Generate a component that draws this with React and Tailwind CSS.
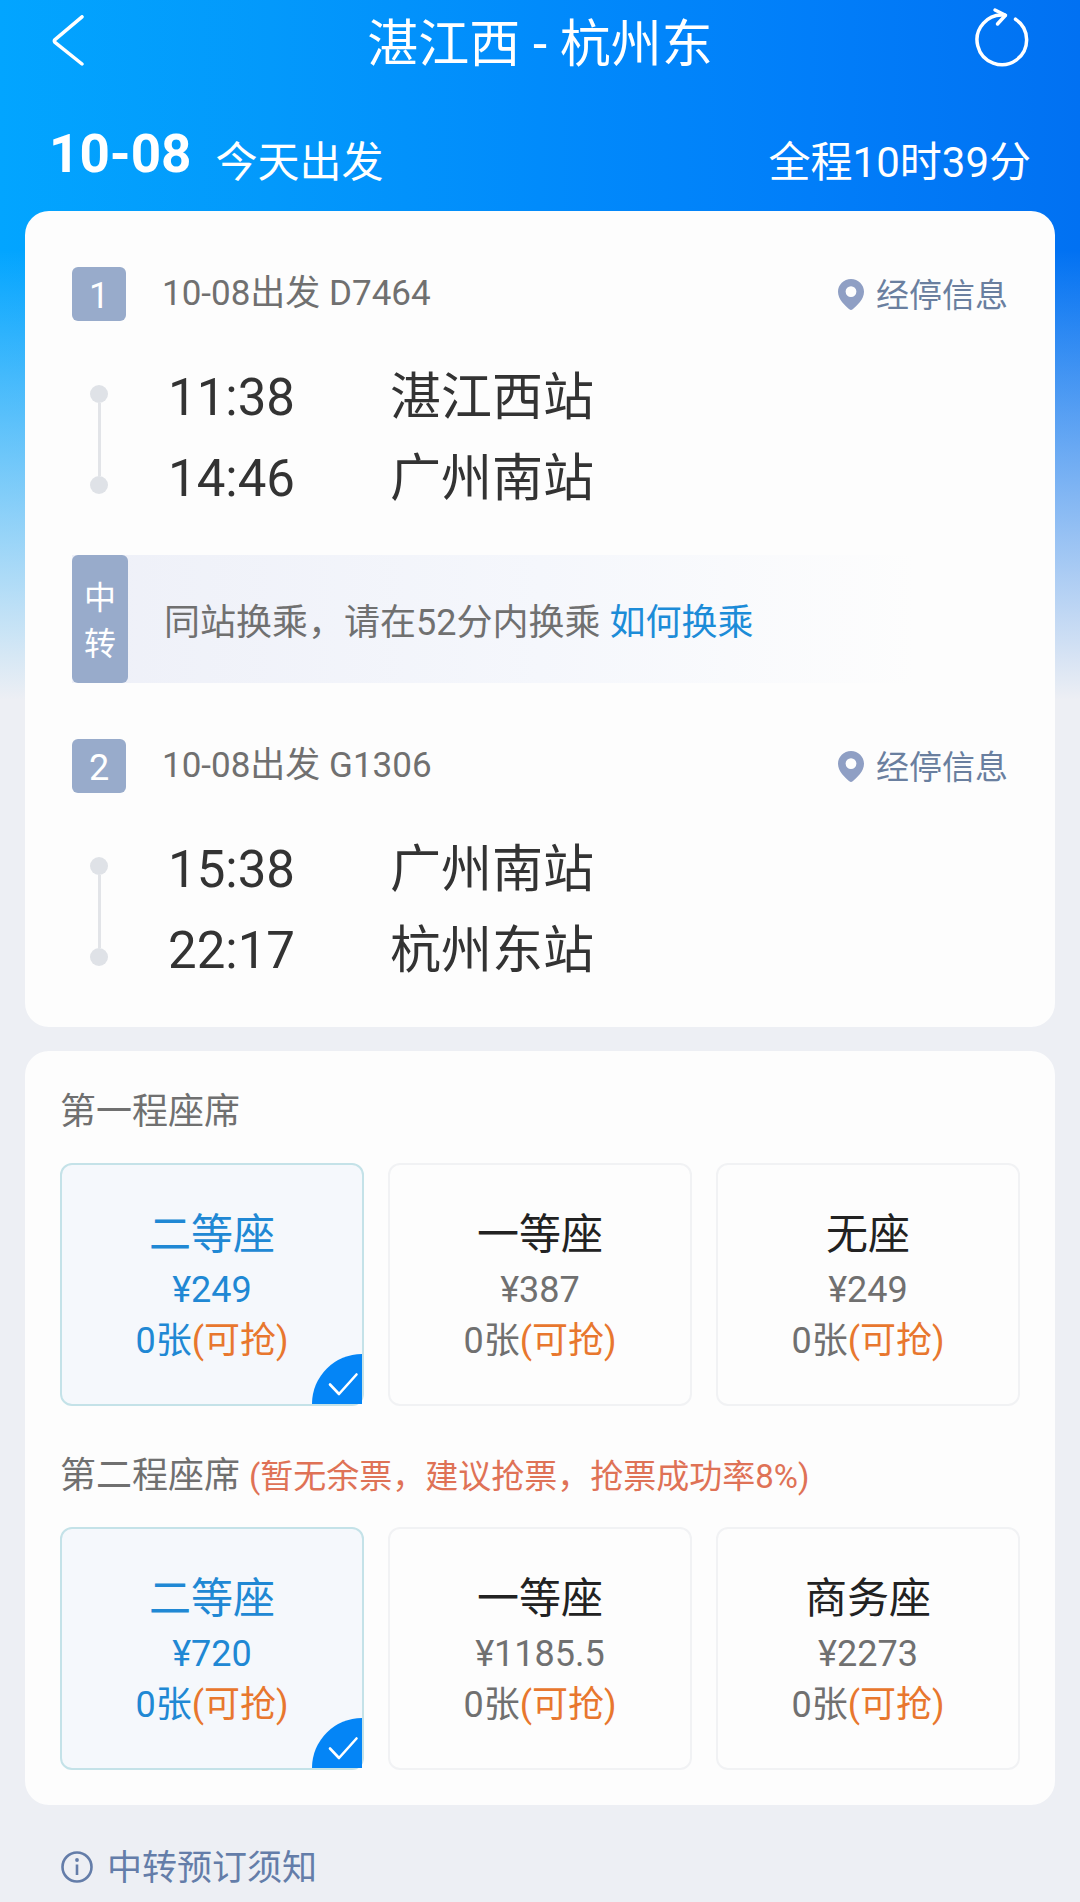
import { useState } from "react"

const legs = [
  {
    no: 1,
    label: "10-08出发 D7464",
    stops: [
      { time: "11:38", station: "湛江西站" },
      { time: "14:46", station: "广州南站" },
    ],
  },
  {
    no: 2,
    label: "10-08出发 G1306",
    stops: [
      { time: "15:38", station: "广州南站" },
      { time: "22:17", station: "杭州东站" },
    ],
  },
]

const firstSeats = [
  { name: "二等座", price: "¥249" },
  { name: "一等座", price: "¥387" },
  { name: "无座", price: "¥249" },
]

const secondSeats = [
  { name: "二等座", price: "¥720" },
  { name: "一等座", price: "¥1185.5" },
  { name: "商务座", price: "¥2273" },
]

function BackIcon() {
  return (
    <svg className="h-[54px] w-[54px]" viewBox="0 0 54 54" fill="none" stroke="currentColor" strokeWidth="3.5" strokeLinecap="round" strokeLinejoin="round">
      <path d="M33 1.8L6 24.6Q4.600 26 6 27.400L33 49" />
    </svg>
  )
}

function RefreshIcon() {
  return (
    <svg className="h-[54px] w-[54px] overflow-visible" viewBox="0 0 54 54" fill="none" stroke="currentColor" strokeWidth="3.5" strokeLinecap="round" strokeLinejoin="round">
      <path d="M38.5 4.2A24.8 24.8 0 1 1 28 .3" />
      <path d="M18 -5L28.500 .3L20.500 9" />
    </svg>
  )
}

function PinIcon() {
  return (
    <svg className="h-[31px] w-[26px]" viewBox="0 0 26 31" fill="#8f9fc4">
      <path fillRule="evenodd" d="M13 0C5.800 0 0 5.700 0 12.800C0 20.500 7 26.500 11.300 30.300C12.300 31.200 13.700 31.200 14.700 30.300C19 26.500 26 20.500 26 12.800C26 5.700 20.200 0 13 0ZM13 7.200A5.400 5.400 0 1 1 13 18A5.400 5.400 0 1 1 13 7.200Z" />
    </svg>
  )
}

function InfoIcon() {
  return (
    <svg className="h-8 w-8" viewBox="0 0 32 32" fill="none" stroke="currentColor" strokeWidth="2.600">
      <circle cx="16" cy="16" r="14.500" />
      <path d="M16 13.500V24" />
      <circle cx="16" cy="9" r="1.900" fill="currentColor" stroke="none" />
    </svg>
  )
}

function Leg({ leg }) {
  return (
    <section>
      <div className="flex items-center justify-between">
        <div className="flex items-center gap-9">
          <span className="h-[54px] w-[54px] rounded-md bg-[#98abcb] text-center text-[36px] leading-[58px] text-white">
            {leg.no}
          </span>
          <h2 className="text-[35px] leading-[54px] text-[#707070]">{leg.label}</h2>
        </div>
        <a href="#stops" className="flex items-center gap-3 text-[33px] leading-[50px] text-[#6a7f9f]">
          <PinIcon />
          <span className="pt-1">经停信息</span>
        </a>
      </div>

      <div className="mt-9 flex items-center gap-[42px]">
        {/* Route line */}
        <div className="flex w-[54px] flex-col items-center pt-0.5">
          <span className="h-[18px] w-[18px] rounded-full bg-[#dfe2e7]"></span>
          <span className="h-[73px] w-[3px] bg-[#e2e4e8]"></span>
          <span className="h-[18px] w-[18px] rounded-full bg-[#dfe2e7]"></span>
        </div>

        <ul>
          {leg.stops.map((stop) => (
            <li key={stop.time} className="flex text-[51px] leading-[81px] text-[#333333]">
              <span className="w-[222px]">{stop.time}</span>
              <span>{stop.station}</span>
            </li>
          ))}
        </ul>
      </div>
    </section>
  )
}

function SeatCard({ group, seat, checked, onChange }) {
  return (
    <label
      className={
        checked
          ? "relative flex cursor-pointer flex-col items-center rounded-xl border-2 border-[#c4e2e8] bg-[#f5f8fc] pt-10 pb-[37px] text-[#2088d4]"
          : "relative flex cursor-pointer flex-col items-center rounded-xl border-2 border-[#f1f2f4] pt-10 pb-[37px] text-[#707070]"
      }
    >
      <input type="radio" name={group} className="sr-only" checked={checked} onChange={onChange} />
      <span className={checked ? "text-[42px] leading-[60px]" : "text-[42px] leading-[60px] text-[#222222]"}>
        {seat.name}
      </span>
      <span className="text-[36px] leading-[51px]">{seat.price}</span>
      <span className="text-[36px] leading-[51px]">
        0张<span className="text-[#e8772e]">(可抢)</span>
      </span>

      {checked && (
        <span className="absolute right-0 bottom-0 h-[50px] w-[50px] rounded-tl-full rounded-br-[10px] bg-[#0485f6] text-white">
          <svg viewBox="0 0 50 50" fill="none" stroke="currentColor" strokeWidth="2.600" strokeLinecap="round" strokeLinejoin="round">
            <path d="M18 30.500L27 40L44.500 20.500" />
          </svg>
        </span>
      )}
    </label>
  )
}

function SeatGroup({ group, seats }) {
  const [selected, setSelected] = useState(0)

  return (
    <div className="mt-6 grid grid-cols-3 gap-6">
      {seats.map((seat, i) => (
        <SeatCard
          key={seat.name}
          group={group}
          seat={seat}
          checked={selected === i}
          onChange={() => setSelected(i)}
        />
      ))}
    </div>
  )
}

function App() {
  return (
    <div className="min-h-screen bg-[linear-gradient(to_bottom,transparent_250px,#edeff4_700px),linear-gradient(to_right,#02a5ff,#0399fb_25%,#018bfb_50%,#017ef9_75%,#0171f2)] font-['Roboto','Noto_Sans_CJK_SC',sans-serif]">

      {/* Header */}
      <header className="px-[49px] text-white">
        <div className="flex items-center justify-between py-3">
          <button type="button" aria-label="返回">
            <BackIcon />
          </button>
          <h1 className="pt-1.5 text-[51px] leading-[54px]">湛江西 - 杭州东</h1>
          <button type="button" aria-label="刷新">
            <RefreshIcon />
          </button>
        </div>

        <div className="mt-8 flex items-end justify-between text-[42px] leading-[58px]">
          <div className="flex items-end gap-6">
            <span className="text-[53px] leading-[76px] font-bold">10-08</span>
            <span>今天出发</span>
          </div>
          <span>全程10时39分</span>
        </div>
      </header>

      <main className="flex flex-col gap-6 px-[25px] pt-[19px]">

        {/* Route */}
        <div className="rounded-3xl bg-[#fdfdfd] px-[47px] pt-14 pb-9">
          <Leg leg={legs[0]} />

          <div className="mt-9 mb-14 flex items-center gap-9 bg-[linear-gradient(to_right,#eef0f8,#f5f7fc_50%,#fdfdfd_90%)] text-[36px] leading-[46px]">
            <div className="flex w-14 flex-col items-center rounded-md bg-[#98abcb] pt-5 pb-4 text-[32px] text-white">
              <span>中</span>
              <span>转</span>
            </div>
            <p className="pt-2 text-[#707070]">
              同站换乘，请在52分内换乘{" "}
              <a href="#transfer" className="text-[#1c8cd8]">如何换乘</a>
            </p>
          </div>

          <Leg leg={legs[1]} />
        </div>

        {/* Seats */}
        <div className="rounded-3xl bg-[#fdfdfd] p-[35px]">
          <h2 className="text-[36px] leading-[53px] text-[#707070]">第一程座席</h2>
          <SeatGroup group="first" seats={firstSeats} />

          <h2 className="mt-11 text-[36px] leading-[53px] text-[#707070]">
            第二程座席{" "}
            <span className="text-[33px] text-[#df7256]">(暂无余票，建议抢票，抢票成功率8%)</span>
          </h2>
          <SeatGroup group="second" seats={secondSeats} />
        </div>
      </main>

      <footer className="px-[61px] pt-9">
        <a href="#notice" className="inline-flex items-center gap-3.5 text-[35px] leading-[48px] text-[#647da9]">
          <InfoIcon />
          <span className="pt-1">中转预订须知</span>
        </a>
      </footer>

    </div>
  )
}

export default App
